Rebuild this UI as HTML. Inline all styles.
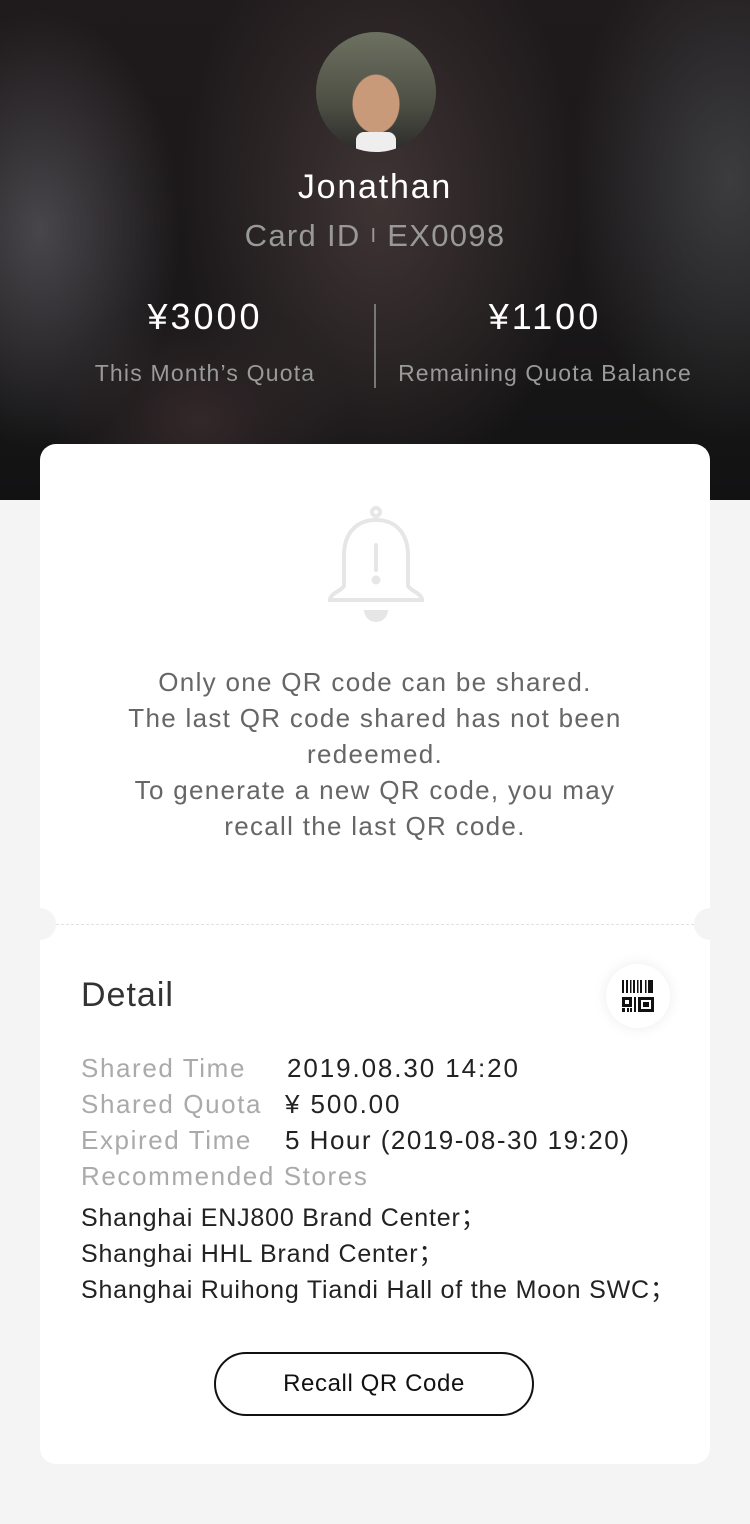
<!DOCTYPE html>
<html><head><meta charset="utf-8"><style>
*{margin:0;padding:0;box-sizing:border-box}
body{width:750px;height:1524px;background:#f4f4f4;font-family:"Liberation Sans",sans-serif;position:relative;overflow:hidden}
.hero{position:absolute;left:0;top:0;width:750px;height:500px;background:
radial-gradient(ellipse 200px 300px at 380px 200px,#3f3434 0%,rgba(60,50,50,0) 100%),
radial-gradient(ellipse 140px 220px at 40px 230px,#48464a 0%,rgba(70,70,70,0) 100%),
radial-gradient(ellipse 160px 260px at 730px 180px,#3c3c3e 0%,rgba(60,60,60,0) 100%),
radial-gradient(ellipse 150px 120px at 200px 420px,#33282a 0%,rgba(50,40,40,0) 100%),
linear-gradient(#1f1a1c,#1a1819 60%,#121213);}
.av{position:absolute;left:316px;top:32px;width:120px;height:120px;border-radius:50%;overflow:hidden;background:radial-gradient(ellipse 24px 30px at 60px 72px,#c99a7a 0 96%,transparent 100%),linear-gradient(#6d7161,#4d4f44 60%,#2b2b2a)}
.av:after{content:"";position:absolute;left:40px;top:100px;width:40px;height:30px;background:#eee;border-radius:8px}
.t{position:absolute;width:100%;text-align:center}
.card{position:absolute;left:40px;top:444px;width:670px;height:1020px;background:#fff;border-radius:16px}
.notch{position:absolute;width:32px;height:32px;border-radius:50%;background:#f4f4f4;top:908px}
.msg{position:absolute;left:40px;width:670px;top:664px;text-align:center;color:#666;font-size:26px;line-height:36px;letter-spacing:1.3px}
.lab{color:#aaa;letter-spacing:1.6px}
.val{letter-spacing:1.9px}
.row{position:absolute;left:81px;font-size:26px;color:#222}
</style></head><body>
<div class="hero"></div>
<div class="av"></div>
<div class="t" style="top:168px;color:#fff;font-size:34px;letter-spacing:1.8px">Jonathan</div>
<div class="t" style="top:218px;color:#999;font-size:31px;letter-spacing:1.3px">Card ID <span style="font-size:20px;position:relative;top:-4px">I</span> EX0098</div>
<div style="position:absolute;left:60px;width:290px;top:296px;text-align:center;color:#fff;font-size:36px;letter-spacing:3px">¥3000</div>
<div style="position:absolute;left:60px;width:290px;top:360px;text-align:center;color:#9a9a9a;font-size:23px;letter-spacing:1.2px">This Month’s Quota</div>
<div style="position:absolute;left:374px;top:304px;width:2px;height:84px;background:#777"></div>
<div style="position:absolute;left:395px;width:300px;top:296px;text-align:center;color:#fff;font-size:36px;letter-spacing:3px">¥1100</div>
<div style="position:absolute;left:395px;width:300px;top:360px;text-align:center;color:#9a9a9a;font-size:23px;letter-spacing:1.1px">Remaining Quota Balance</div>
<div class="card"></div>
<div class="notch" style="left:24px"></div>
<div class="notch" style="left:694px"></div>
<div style="position:absolute;left:56px;width:638px;top:924px;border-top:1px dashed #e2e2e2"></div>
<svg style="position:absolute;left:300px;top:490px" width="150" height="150" viewBox="300 490 150 150" fill="none" stroke="#e6e6e6" stroke-width="4">
<circle cx="376" cy="512" r="4"/>
<path d="M376 520 C355 520 344 535 344 555 L344 585 C344 590 330 593 330 600 L422 600 C422 593 408 590 408 585 L408 555 C408 535 397 520 376 520 Z"/>
<path d="M376 545 L376 570" stroke-linecap="round"/>
<circle cx="376" cy="580" r="2.5" fill="#e6e6e6"/>
<path d="M364 610 A12 12 0 0 0 388 610 Z" fill="#e6e6e6" stroke="none"/>
</svg>
<div class="msg">Only one QR code can be shared.<br>The last QR code shared has not been<br>redeemed.<br>To generate a new QR code, you may<br>recall the last QR code.</div>
<div class="row" style="top:976px;font-size:34px;color:#333;letter-spacing:1px">Detail</div>
<div style="position:absolute;left:606px;top:964px;width:64px;height:64px;border-radius:50%;background:#fff;box-shadow:0 0 14px rgba(0,0,0,0.08)"></div>
<svg style="position:absolute;left:622px;top:980px" width="32" height="32" viewBox="0 0 32 32">
<g fill="#111"><rect x="0" y="0" width="2" height="13"/><rect x="4" y="0" width="2" height="13"/><rect x="8" y="0" width="1.5" height="13"/><rect x="11" y="0" width="2" height="13"/><rect x="15" y="0" width="1.5" height="13"/><rect x="18" y="0" width="2" height="13"/><rect x="23" y="0" width="1.5" height="13"/><rect x="26" y="0" width="5" height="13"/>
<path d="M0 17h10v10H0zM3 20v4h4v-4z" fill-rule="evenodd"/><rect x="0" y="28" width="3" height="4"/><rect x="5" y="28" width="2" height="4"/><rect x="8" y="28" width="2" height="4"/>
<rect x="12" y="17" width="2" height="15"/><path d="M16 17h16v15H16zM19 20v9h10v-9z" fill-rule="evenodd"/><rect x="21" y="22" width="6" height="5"/></g></svg>
<div class="row" style="top:1053px"><span class="lab">Shared Time</span><span class="val" style="position:absolute;left:206px;white-space:nowrap">2019.08.30 14:20</span></div>
<div class="row" style="top:1089px"><span class="lab">Shared Quota</span><span class="val" style="position:absolute;left:204px;white-space:nowrap">¥ 500.00</span></div>
<div class="row" style="top:1125px;white-space:nowrap"><span class="lab">Expired Time</span><span class="val" style="position:absolute;left:204px;letter-spacing:1.5px">5 Hour (2019-08-30 19:20)</span></div>
<div class="row" style="top:1161px"><span class="lab">Recommended Stores</span></div>
<div class="row" style="top:1200px;font-size:25px;line-height:36px;white-space:nowrap;letter-spacing:0.8px">Shanghai ENJ800 Brand Center；<br>Shanghai HHL Brand Center；<br>Shanghai Ruihong Tiandi Hall of the Moon SWC；</div>
<div style="position:absolute;left:214px;top:1352px;width:320px;height:64px;border:2px solid #111;border-radius:32px;text-align:center;line-height:60px;font-size:24px;color:#111;letter-spacing:0.6px">Recall QR Code</div>
</body></html>
